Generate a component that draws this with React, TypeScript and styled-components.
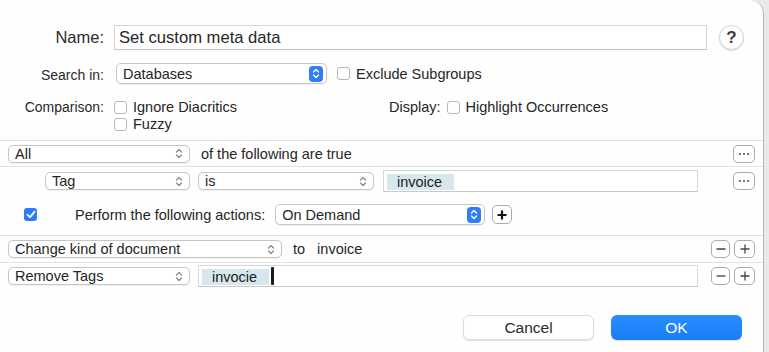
import styled, { createGlobalStyle } from 'styled-components';

const Global = createGlobalStyle`
  html, body {
    margin: 0;
    padding: 0;
    background: #e9e9e9;
    font-family: "Liberation Sans", Arial, sans-serif;
    color: #262626;
  }
`;

const Dialog = styled.div`
  width: 764px;
  height: 352px;
  background: #fefefe;
  border-right: 1px solid #b9b9b9;
  border-top-right-radius: 14px;
  box-sizing: border-box;
  display: flex;
  flex-direction: column;
  overflow: hidden;
`;

const Header = styled.div`
  display: grid;
  grid-template-columns: 104px 1fr;
  column-gap: 10px;
  padding-top: 25px;
`;

const Label = styled.div<{ size?: number; top?: number }>`
  text-align: right;
  font-size: ${p => p.size || 14}px;
  padding-top: ${p => p.top || 0}px;
  color: #2a2a2a;
  white-space: nowrap;
`;

const Line = styled.div<{ h: number; mt?: number }>`
  display: flex;
  align-items: center;
  height: ${p => p.h}px;
  margin-top: ${p => p.mt || 0}px;
  gap: 10px;
`;

const CompareBlock = styled.div`
  display: flex;
  margin-top: 16px;
`;

const CheckStack = styled.div`
  display: flex;
  flex-direction: column;
  gap: 3px;
`;

const NameInput = styled.div`
  width: 593px;
  height: 25px;
  border: 1px solid #d6d6d6;
  border-bottom-color: #c4c4c4;
  box-sizing: border-box;
  font-size: 16.6px;
  line-height: 23px;
  padding-left: 4px;
  background: #fff;
`;

const HelpButton = styled.div`
  width: 25px;
  height: 25px;
  border-radius: 50%;
  border: 1px solid #d2d2d2;
  box-shadow: 0 1px 1px rgba(0,0,0,0.12);
  margin-left: 2px;
  display: flex;
  align-items: center;
  justify-content: center;
  font-size: 17px;
  font-weight: bold;
  color: #3a3a3a;
  background: #fff;
  box-sizing: border-box;
`;

const Popup = styled.div<{ w: number; h?: number; ml?: number }>`
  position: relative;
  width: ${p => p.w}px;
  height: ${p => p.h || 18}px;
  margin-left: ${p => p.ml || 0}px;
  box-sizing: border-box;
  border: 1px solid #c6c6c6;
  border-radius: 5px;
  background: #fff;
  box-shadow: 0 1px 1px rgba(0,0,0,0.06);
  font-size: 14.5px;
  display: flex;
  align-items: center;
  padding-left: 6px;
  flex-shrink: 0;
`;

const Stepper = styled.span<{ blue?: boolean }>`
  position: absolute;
  right: 3px;
  top: 50%;
  transform: translateY(-50%);
  width: 14px;
  height: 16px;
  border-radius: 4px;
  background: ${p => (p.blue ? '#2f7ef5' : 'transparent')};
  display: flex;
  align-items: center;
  justify-content: center;
`;

const Chevrons = ({ color }: { color: string }) => (
  <svg width="8" height="11" viewBox="0 0 8 11">
    <path d="M1.5 4 L4 1.5 L6.5 4 M1.5 7 L4 9.5 L6.5 7" fill="none" stroke={color} strokeWidth="1.3" strokeLinecap="round" strokeLinejoin="round" />
  </svg>
);

const Check = styled.span<{ on?: boolean }>`
  display: inline-flex;
  align-items: center;
  justify-content: center;
  width: 13px;
  height: 13px;
  box-sizing: border-box;
  border-radius: 3px;
  border: ${p => (p.on ? 'none' : '1px solid #b8b8b8')};
  background: ${p => (p.on ? '#2c7cf6' : '#fff')};
  flex-shrink: 0;
`;

const CheckLabel = styled.label<{ ml?: number }>`
  display: flex;
  align-items: center;
  gap: 6px;
  height: 14px;
  font-size: 14.5px;
  margin-left: ${p => p.ml || 0}px;
  white-space: nowrap;
`;

const Criteria = styled.div`
  margin-top: 9px;
  border-top: 1px solid #e2e2e2;
`;

const Row = styled.div<{ h: number; line?: boolean; pl?: number; stack?: boolean }>`
  display: flex;
  flex-direction: ${p => (p.stack ? 'column' : 'row')};
  align-items: ${p => (p.stack ? 'stretch' : 'center')};
  height: ${p => p.h}px;
  padding-left: ${p => p.pl ?? 8}px;
  padding-right: 8px;
  box-sizing: border-box;
  border-bottom: ${p => (p.line ? '1px solid #e2e2e2' : 'none')};
  font-size: 14.5px;
`;

const SubRow = styled.div<{ h: number; mt: number }>`
  display: flex;
  align-items: center;
  height: ${p => p.h}px;
  margin-top: ${p => p.mt}px;
`;

const Gap = styled.span<{ w: number }>`
  width: ${p => p.w}px;
  flex-shrink: 0;
`;

const Spacer = styled.div`
  flex: 1;
`;

const Text = styled.span<{ ml?: number }>`
  margin-left: ${p => p.ml || 0}px;
  white-space: nowrap;
`;

const TokenField = styled.div<{ w: number; ml: number }>`
  width: ${p => p.w}px;
  margin-left: ${p => p.ml}px;
  height: 22px;
  box-sizing: border-box;
  border: 1px solid #d8d8d8;
  border-bottom-color: #c8c8c8;
  background: #fff;
  display: flex;
  align-items: center;
  padding-left: 3px;
`;

const Token = styled.span`
  background: #d7e7ee;
  height: 16px;
  line-height: 17px;
  padding: 0 12px 0 10px;
  font-size: 14.5px;
  color: #222;
  margin-top: 2px;
`;

const Caret = styled.span`
  width: 3px;
  height: 18px;
  background: #1a1a1a;
  margin-left: 2px;
  border-radius: 1px;
`;

const SmallButton = styled.div<{ w?: number; h?: number; ml?: number }>`
  width: ${p => p.w || 20}px;
  height: ${p => p.h || 18}px;
  margin-left: ${p => p.ml || 0}px;
  box-sizing: border-box;
  border: 1px solid #ababab;
  border-radius: 5px;
  background: #fff;
  display: flex;
  align-items: center;
  justify-content: center;
  flex-shrink: 0;
`;

const Footer = styled.div`
  display: flex;
  justify-content: flex-end;
  gap: 17px;
  padding: 26px 21px 0 0;
`;

const Button = styled.div<{ primary?: boolean }>`
  width: 131px;
  height: 25px;
  border-radius: 6px;
  box-sizing: border-box;
  display: flex;
  align-items: center;
  justify-content: center;
  font-size: 15.5px;
  color: ${p => (p.primary ? '#fff' : '#2a2a2a')};
  background: ${p => (p.primary ? 'linear-gradient(#2a8dfc, #157ef8)' : '#fff')};
  border: ${p => (p.primary ? 'none' : '1px solid #dcdcdc')};
  box-shadow: 0 1px 1px rgba(0,0,0,0.12);
`;

const Dots = () => (
  <svg width="12" height="4" viewBox="0 0 12 4">
    <circle cx="2" cy="2" r="1.1" fill="#555" />
    <circle cx="6" cy="2" r="1.1" fill="#555" />
    <circle cx="10" cy="2" r="1.1" fill="#555" />
  </svg>
);

const Minus = () => (
  <svg width="12" height="12" viewBox="0 0 12 12">
    <path d="M1.5 6 H10.5" stroke="#444" strokeWidth="1.3" />
  </svg>
);

const Plus = ({ bold }: { bold?: boolean }) => (
  <svg width="12" height="12" viewBox="0 0 12 12">
    <path d="M1.5 6 H10.5 M6 1.5 V10.5" stroke={bold ? '#111' : '#444'} strokeWidth={bold ? 2.2 : 1.3} />
  </svg>
);

const Tick = () => (
  <svg width="10" height="9" viewBox="0 0 10 9">
    <path d="M1.5 4.8 L4 7.2 L8.6 1.6" fill="none" stroke="#fff" strokeWidth="1.8" strokeLinecap="round" strokeLinejoin="round" />
  </svg>
);

const PopupStep = ({ w, label, h, blue, ml }: { w: number; label: string; h?: number; blue?: boolean; ml?: number }) => (
  <Popup w={w} h={h} ml={ml}>
    {label}
    <Stepper blue={blue}>
      <Chevrons color={blue ? '#fff' : '#8a8a8a'} />
    </Stepper>
  </Popup>
);

const MinusPlus = () => (
  <>
    <SmallButton w={19}><Minus /></SmallButton>
    <SmallButton w={21} ml={4}><Plus /></SmallButton>
  </>
);

export default function App() {
  return (
    <>
      <Global />
      <Dialog>
        <Header>
          <Label size={16.5} top={3}>Name:</Label>
          <Line h={25}>
            <NameInput>Set custom meta data</NameInput>
            <HelpButton>?</HelpButton>
          </Line>

          <Label top={17}>Search in:</Label>
          <Line h={21} mt={13}>
            <PopupStep w={211} h={21} ml={2} label="Databases" blue />
            <CheckLabel><Check />Exclude Subgroups</CheckLabel>
          </Line>

          <Label top={15}>Comparison:</Label>
          <CompareBlock>
            <CheckStack>
              <CheckLabel><Check />Ignore Diacritics</CheckLabel>
              <CheckLabel><Check />Fuzzy</CheckLabel>
            </CheckStack>
            <CheckLabel ml={152}>
              <Text>Display:</Text><Check />Highlight Occurrences
            </CheckLabel>
          </CompareBlock>
        </Header>

        <Criteria>
          <Row h={26} line>
            <PopupStep w={182} label="All" />
            <Text ml={11}>of the following are true</Text>
            <Spacer />
            <SmallButton w={22}><Dots /></SmallButton>
          </Row>
          <Row h={69} line pl={0} stack>
            <SubRow h={22} mt={3}>
              <Gap w={45} />
              <PopupStep w={145} label="Tag" />
              <Gap w={8} />
              <PopupStep w={176} label="is" />
              <TokenField w={315} ml={9}><Token>invoice</Token></TokenField>
              <Spacer />
              <SmallButton w={22}><Dots /></SmallButton>
            </SubRow>
            <SubRow h={21} mt={12}>
              <Gap w={24} />
              <Check on><Tick /></Check>
              <Text ml={38}>Perform the following actions:</Text>
              <Gap w={10} />
              <PopupStep w={210} h={21} label="On Demand" blue />
              <SmallButton w={20} h={19} ml={7}><Plus bold /></SmallButton>
            </SubRow>
          </Row>
          <Row h={27} line>
            <PopupStep w={274} label="Change kind of document" />
            <Text ml={11}>to</Text>
            <Text ml={12}>invoice</Text>
            <Spacer />
            <MinusPlus />
          </Row>
          <Row h={26}>
            <PopupStep w={182} label="Remove Tags" />
            <TokenField w={500} ml={8}><Token>invocie</Token><Caret /></TokenField>
            <Spacer />
            <MinusPlus />
          </Row>
        </Criteria>

        <Footer>
          <Button>Cancel</Button>
          <Button primary>OK</Button>
        </Footer>
      </Dialog>
    </>
  );
}
